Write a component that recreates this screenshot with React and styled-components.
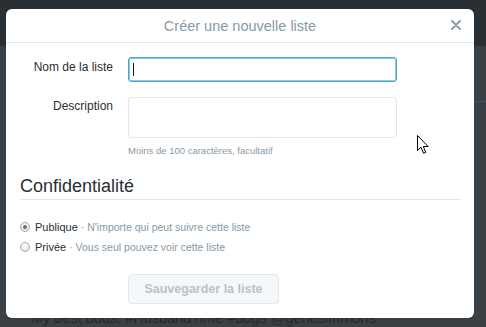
import React from "react";
import styled, { createGlobalStyle } from "styled-components";

const Global = createGlobalStyle`
  html, body { margin: 0; padding: 0; }
  body {
    width: 486px; height: 327px; overflow: hidden;
    background: #3b4044;
    font-family: "Liberation Sans", Arial, sans-serif;
  }
`;

const Page = styled.div`
  position: relative;
  width: 486px;
  height: 327px;
  overflow: hidden;
  display: flex;
  flex-direction: column;
`;

const TopBar = styled.div`
  height: 46px;
  background: #2a2f33;
  flex: none;
`;

const Feed = styled.div`
  flex: 1;
  display: flex;
  flex-direction: column;
  padding-left: 31px;
`;

const FeedRow = styled.div`
  height: ${(p) => p.$h}px;
  border-bottom: 1px solid ${(p) => p.$line || "#363b3f"};
  flex: none;
`;

const FeedText = styled.div`
  margin-top: auto;
  margin-bottom: 1px;
  font-size: 14.5px;
  line-height: 16px;
  color: #25292d;
  white-space: nowrap;
`;

const Overlay = styled.div`
  position: absolute;
  inset: 0;
  padding: 9px 12px 9px 6px;
  display: flex;
  align-items: flex-start;
`;

const Modal = styled.div`
  width: 468px;
  height: 309px;
  background: #fff;
  border-radius: 6px;
  display: flex;
  flex-direction: column;
  overflow: hidden;
`;

const Header = styled.div`
  height: 33px;
  border-bottom: 1px solid #e1e8ed;
  display: flex;
  align-items: center;
  justify-content: center;
  position: relative;
  flex: none;
`;

const Title = styled.div`
  font-size: 14.5px;
  color: #8899a6;
  margin-top: 1px;
`;

const Close = styled.button`
  position: absolute;
  right: 12px;
  top: 10px;
  width: 12px;
  height: 12px;
  padding: 0;
  border: 0;
  background: none;
  display: flex;
  align-items: center;
  justify-content: center;
`;

const Form = styled.div`
  display: grid;
  grid-template-columns: 107px 269px;
  column-gap: 15px;
  padding-top: 14px;
`;

const Label = styled.div`
  text-align: right;
  font-size: 12px;
  color: #292f33;
  padding-top: ${(p) => p.$pt || 3}px;
`;

const Field = styled.div`
  display: flex;
  flex-direction: column;
  margin-bottom: ${(p) => p.$mb || 0}px;
`;

const Input = styled.div`
  box-sizing: border-box;
  height: ${(p) => p.$h}px;
  border: 1px solid ${(p) => (p.$focus ? "#4ba6c9" : "#e1e8ed")};
  box-shadow: ${(p) => (p.$focus ? "inset 0 0 0 1px #8ccae0" : "none")};
  border-radius: 3px;
  display: flex;
  align-items: center;
  padding-left: 4px;
`;

const Caret = styled.span`
  width: 1px;
  height: 13px;
  background: #14171a;
`;

const Hint = styled.div`
  font-size: 9.5px;
  color: #8899a6;
  margin-top: 7px;
`;

const Section = styled.div`
  padding: 0 13px 0 14px;
  margin-top: 20px;
`;

const SectionTitle = styled.div`
  font-size: 18px;
  line-height: 21px;
  color: #292f33;
  padding-bottom: 2px;
  border-bottom: 1px solid #e1e8ed;
`;

const Radios = styled.div`
  display: flex;
  flex-direction: column;
  gap: 6px;
  margin-top: 20px;
`;

const RadioRow = styled.div`
  display: flex;
  align-items: center;
  font-size: 11px;
  height: 14px;
  white-space: nowrap;
`;

const RadioDot = styled.span`
  box-sizing: border-box;
  width: 10px;
  height: 10px;
  border-radius: 50%;
  border: 1px solid #a9a9a9;
  background: radial-gradient(circle at 50% 35%, #ffffff, #dcdcdc);
  margin-right: 5px;
  display: flex;
  align-items: center;
  justify-content: center;
  &::after {
    content: "";
    width: 4px;
    height: 4px;
    border-radius: 50%;
    background: ${(p) => (p.$checked ? "#6a6a6a" : "transparent")};
  }
`;

const Strong = styled.span`
  color: #292f33;
`;

const Muted = styled.span`
  color: #8899a6;
  font-size: 10.5px;
  margin-left: 3px;
`;

const Footer = styled.div`
  padding-left: 122px;
  margin-top: 20px;
`;

const SaveButton = styled.button`
  box-sizing: border-box;
  width: 151px;
  height: 30px;
  border: 1px solid #e1e8ed;
  border-radius: 4px;
  background: #f5f8fa;
  color: #b6c3cc;
  font-family: "Liberation Sans", Arial, sans-serif;
  font-weight: bold;
  font-size: 12.5px;
  padding: 0;
`;

const Pointer = styled.svg`
  position: absolute;
  left: 417px;
  top: 135px;
`;

export default function App() {
  return (
    <>
      <Global />
      <Page>
        <TopBar />
        <Feed>
          <FeedRow $h={55} $line="#2f5a70" />
          <FeedRow $h={60} />
          <FeedRow $h={50} />
          <FeedText>My best buds. #HusbandTime #dogs @genesimmons</FeedText>
        </Feed>
        <Overlay>
          <Modal>
            <Header>
              <Title>Créer une nouvelle liste</Title>
              <Close aria-label="Fermer">
                <svg width="10" height="10" viewBox="0 0 10 10">
                  <path d="M1 1L9 9M9 1L1 9" stroke="#8899a6" strokeWidth="1.8" strokeLinecap="round" />
                </svg>
              </Close>
            </Header>
            <Form>
              <Label $pt={3}>Nom de la liste</Label>
              <Field $mb={15}>
                <Input $h={25} $focus>
                  <Caret />
                </Input>
              </Field>
              <Label $pt={2}>Description</Label>
              <Field>
                <Input $h={41} />
                <Hint>Moins de 100 caractères, facultatif</Hint>
              </Field>
            </Form>
            <Section>
              <SectionTitle>Confidentialité</SectionTitle>
              <Radios>
                <RadioRow>
                  <RadioDot $checked />
                  <Strong>Publique</Strong>
                  <Muted>· N'importe qui peut suivre cette liste</Muted>
                </RadioRow>
                <RadioRow>
                  <RadioDot />
                  <Strong>Privée</Strong>
                  <Muted>· Vous seul pouvez voir cette liste</Muted>
                </RadioRow>
              </Radios>
            </Section>
            <Footer>
              <SaveButton>Sauvegarder la liste</SaveButton>
            </Footer>
          </Modal>
        </Overlay>
        <Pointer width="13" height="20" viewBox="0 0 13 20">
          <path
            d="M0.5 0.5 L0.5 15.5 L4 12.2 L6.6 18.3 L8.8 17.4 L6.3 11.5 L11.2 11.5 Z"
            fill="#fff"
            stroke="#000"
            strokeWidth="1"
            strokeLinejoin="miter"
          />
        </Pointer>
      </Page>
    </>
  );
}
